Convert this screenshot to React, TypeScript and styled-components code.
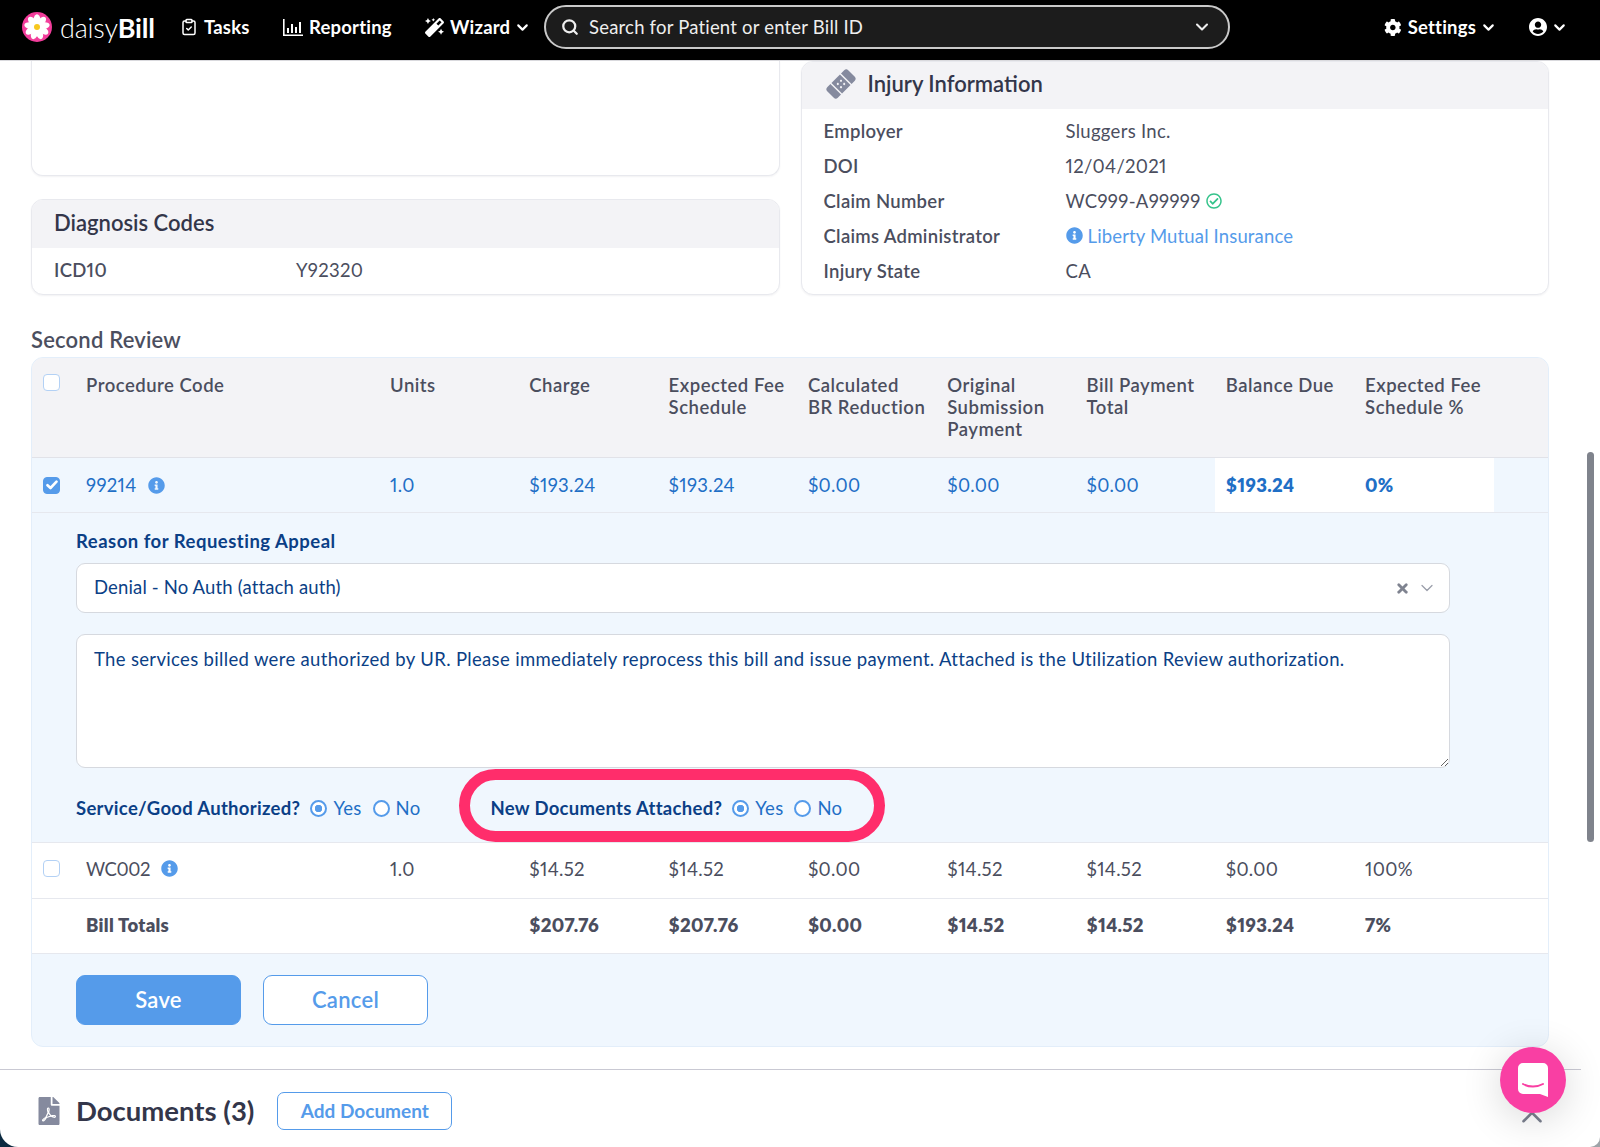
import * as React from 'react';
import styled, { createGlobalStyle } from 'styled-components';
import { ChevronDown, ChevronUp, ClipboardCheck, Search, X } from 'lucide-react';
import { FaBandAid, FaCog, FaFilePdf, FaInfoCircle, FaMagic, FaRegCheckCircle, FaUserCircle } from 'react-icons/fa';

const BLUE = '#559bea';
const LINK = '#1f6fc6';
const NAVY = '#0b3f86';
const TEXT = '#4b4e5e';

const GlobalStyle = createGlobalStyle`
    html, body {
        margin: 0;
        padding: 0;
        background: #fff;
    }
    * {
        box-sizing: border-box;
    }
    body {
        font-family: Lato, "Liberation Sans", sans-serif;
        font-size: 18.5px;
        font-feature-settings: "pnum";
        color: ${TEXT};
    }
`;

const Frame = styled.div`
    position: relative;
    width: 1600px;
    height: 1147px;
    overflow: hidden;
    background: linear-gradient(to right, #0b2a40 50%, #9ea3a8 50%);
`;

const Page = styled.div`
    height: 100%;
    display: flex;
    flex-direction: column;
    background: #fff;
    border-radius: 0 0 10px 18px;
    overflow: hidden;
`;

const TopBar = styled.header`
    height: 61px;
    flex: none;
    display: flex;
    align-items: center;
    background: #000;
    color: #fff;
    border-bottom: 1px solid #d9d9dd;
    padding: 0 32px 6px 22px;
    font-weight: 700;
`;

const Logo = styled.div`
    display: flex;
    align-items: center;
    gap: 8px;
    width: 158px;
    font-size: 27px;
    font-weight: 300;
    letter-spacing: -0.2px;
    b {
        font-weight: 700;
    }
`;

const NavItem = styled.div<{ $width: number }>`
    display: flex;
    align-items: center;
    gap: 6px;
    width: ${(props) => props.$width}px;
    font-size: 18.5px;
    letter-spacing: 0.2px;
    white-space: nowrap;
`;

const NavChevron = styled(ChevronDown)`
    flex: none;
    margin-left: -2px;
`;

const SearchBox = styled.div`
    width: 686px;
    height: 44px;
    display: flex;
    align-items: center;
    gap: 10px;
    padding: 0 16px 0 15px;
    background: #1c1c1c;
    border: 2px solid #c9c9c9;
    border-radius: 22px;
    font-weight: 400;
    font-size: 18.5px;
    color: #eee;
    letter-spacing: 0.2px;
    span {
        flex: 1;
    }
`;

const NavRight = styled.div`
    margin-left: auto;
    display: flex;
    align-items: center;
    gap: 32px;
`;

const Main = styled.main`
    flex: 1;
    padding: 0 51px 0 31px;
`;

const TopGrid = styled.div`
    display: grid;
    grid-template-columns: 1fr 1fr;
    gap: 21px;
    height: 234px;
`;

const LeftColumn = styled.div`
    display: flex;
    flex-direction: column;
    gap: 23px;
`;

const Card = styled.section`
    background: #fff;
    border: 1px solid #e8e9ee;
    border-radius: 12px;
    box-shadow: 0 1px 2px rgba(40, 40, 70, 0.06);
    overflow: hidden;
`;

const BlankCard = styled(Card)`
    flex: 1;
    border-top: 0;
    border-radius: 0 0 12px 12px;
`;

const CardHeader = styled.h3<{ $height: number }>`
    margin: 0;
    height: ${(props) => props.$height}px;
    display: flex;
    align-items: center;
    gap: 12px;
    padding: 0 22px 4px;
    background: #f3f3f6;
    font-size: 22px;
    font-weight: 600;
    color: #33364a;
    svg {
        width: 30px;
        height: 30px;
        color: #858a9e;
        margin-left: 2px;
        transform: rotate(-45deg);
    }
`;

const InfoList = styled.div`
    padding: 4px 22px 6px;
`;

const InfoRow = styled.div<{ $height?: number }>`
    height: ${(props) => props.$height || 35}px;
    display: grid;
    grid-template-columns: 242px 1fr;
    align-items: center;
    letter-spacing: 0.3px;
`;

const InfoLabel = styled.div`
    font-weight: 600;
`;

const InfoValue = styled.div`
    display: flex;
    align-items: center;
    gap: 5px;
`;

const BlueText = styled.span`
    color: ${BLUE};
    letter-spacing: 0.15px;
`;

const SectionTitle = styled.h2`
    margin: 33px 0 5px;
    height: 24px;
    line-height: 24px;
    font-size: 22px;
    font-weight: 600;
    letter-spacing: 0.2px;
`;

const ReviewTable = styled.div`
    background: #f0f7fe;
    border: 1px solid #e3eefa;
    border-radius: 12px;
    overflow: hidden;
    height: 690px;
    display: flex;
    flex-direction: column;
    letter-spacing: 0.3px;
`;

const COLUMNS = '44px 304px repeat(8, 139.3px) 1fr';

const HeadRow = styled.div`
    display: grid;
    grid-template-columns: ${COLUMNS};
    height: 100px;
    flex: none;
    padding-top: 16px;
    background: #f3f3f6;
    border-bottom: 1px solid #e1e2e8;
    line-height: 22px;
    font-weight: 600;
    letter-spacing: 0.5px;
`;

const HeadCell = styled.div`
    padding-left: 10px;
`;

const BodyRow = styled.div<{ $bg: string; $color?: string; $height?: number; $lift?: number }>`
    display: grid;
    grid-template-columns: ${COLUMNS};
    flex: none;
    height: ${(props) => props.$height || 55}px;
    padding-bottom: ${(props) => props.$lift || 0}px;
    background: ${(props) => props.$bg};
    color: ${(props) => props.$color || TEXT};
    border-bottom: 1px solid #e6e8ee;
`;

const Cell = styled.div<{ $white?: boolean; $bold?: boolean }>`
    display: flex;
    align-items: center;
    gap: 11px;
    padding-left: 10px;
    background: ${(props) => (props.$white ? '#fff' : 'transparent')};
    font-weight: ${(props) => (props.$bold ? 800 : 400)};
`;

const WhiteStart = styled(Cell)`
    margin-left: -1px;
    padding-left: 11px;
`;

const TightCode = styled.span`
    letter-spacing: -0.4px;
`;

const CheckCell = styled.div`
    display: flex;
    align-items: center;
    padding-left: 11px;
`;

const CheckBox = styled.span<{ $checked?: boolean }>`
    width: 17px;
    height: 17px;
    border-radius: 4px;
    border: 1.5px solid ${(props) => (props.$checked ? BLUE : '#b3d1f5')};
    background: ${(props) => (props.$checked ? BLUE : '#fff')};
    color: #fff;
    display: flex;
    align-items: center;
    justify-content: center;
`;

const HeadCheck = styled(CheckCell)`
    align-items: flex-start;
`;

const DetailPanel = styled.div`
    height: 330px;
    flex: none;
    padding: 17px 98px 0 44px;
    border-bottom: 1px solid #e6e8ee;
    color: ${NAVY};
`;

const FieldLabel = styled.div`
    height: 22px;
    line-height: 22px;
    font-weight: 700;
    letter-spacing: 0.5px;
`;

const SelectBox = styled.div`
    margin-top: 11px;
    height: 50px;
    display: flex;
    align-items: center;
    padding: 0 12px 3px 17px;
    background: #fff;
    border: 1px solid #d6d9df;
    border-radius: 9px;
    letter-spacing: 0.15px;
    span {
        flex: 1;
    }
`;

const ClearIcon = styled(X)`
    color: #7f8390;
    margin: 3px 7px 0 0;
`;

const CaretIcon = styled(ChevronDown)`
    color: #9a9eaa;
    margin-top: 3px;
`;

const NoteArea = styled.textarea`
    display: block;
    width: 100%;
    height: 134px;
    margin-top: 21px;
    padding: 12px 17px;
    background: #fff;
    border: 1px solid #d6d9df;
    border-radius: 9px;
    color: ${NAVY};
    font: inherit;
    letter-spacing: 0.33px;
    line-height: 24px;
    outline: none;
`;

const OptionsRow = styled.div`
    margin-top: 24px;
    height: 32px;
    display: flex;
    align-items: center;
    gap: 70px;
`;

const RadioGroup = styled.div`
    position: relative;
    display: flex;
    align-items: center;
`;

const RadioLabel = styled.span`
    font-weight: 700;
    margin-right: 10px;
`;

const RadioDot = styled.span<{ $on?: boolean }>`
    width: 17px;
    height: 17px;
    border-radius: 50%;
    border: 2.5px solid ${BLUE};
    background: ${(props) => (props.$on ? `radial-gradient(circle, ${BLUE} 0 3.5px, #fff 4px)` : '#fff')};
    margin-right: 6px;
`;

const RadioText = styled.span<{ $last?: boolean }>`
    color: ${LINK};
    margin-right: ${(props) => (props.$last ? 0 : 11)}px;
`;

const HighlightRing = styled.div`
    position: absolute;
    left: -32px;
    right: -43px;
    top: -28px;
    bottom: -23px;
    border: 11px solid #ff2d6b;
    border-radius: 38px;
    pointer-events: none;
`;

const ButtonRow = styled.div`
    display: flex;
    gap: 22px;
    padding: 21px 0 0 44px;
`;

const Button = styled.div<{ $primary?: boolean }>`
    width: 165px;
    height: 50px;
    display: flex;
    align-items: center;
    justify-content: center;
    padding-bottom: 2px;
    border-radius: 9px;
    border: 1px solid ${BLUE};
    background: ${(props) => (props.$primary ? BLUE : '#fff')};
    color: ${(props) => (props.$primary ? '#fff' : BLUE)};
    font-size: 22px;
    font-weight: 600;
`;

const DocsBar = styled.footer`
    height: 78px;
    margin-right: 19px;
    flex: none;
    display: flex;
    align-items: center;
    padding: 4px 32px 0 35px;
    border-top: 1px solid #c9c9d3;
    svg {
        flex: none;
    }
`;

const DocsTitle = styled.h2`
    margin: 0 23px 0 13px;
    font-size: 27.5px;
    font-weight: 700;
    color: #33364a;
`;

const AddDocButton = styled.div`
    width: 175px;
    height: 38px;
    display: flex;
    align-items: center;
    justify-content: center;
    border: 1px solid ${BLUE};
    border-radius: 7px;
    color: ${BLUE};
    font-weight: 700;
    font-size: 19px;
`;

const DocsCaret = styled(ChevronUp)`
    margin-left: auto;
    margin-top: 12px;
    color: #7a7f8e;
`;

const ScrollThumb = styled.div`
    position: absolute;
    left: 1587px;
    top: 452px;
    width: 7px;
    height: 390px;
    border-radius: 4px;
    background: #7f838c;
`;

const ChatBubble = styled.div`
    position: absolute;
    left: 1500px;
    top: 1047px;
    width: 66px;
    height: 66px;
    border-radius: 50%;
    background: #f93fa3;
    box-shadow: 0 6px 40px rgba(0, 0, 0, 0.16);
    display: flex;
    align-items: center;
    justify-content: center;
`;

const LogoMark = () => (
    <svg width="30" height="30" viewBox="0 0 30 30">
        <circle cx="15" cy="15" r="15" fill="#f23d9b" />
        {[0, 40, 80, 120, 160, 200, 240, 280, 320].map((angle) => (
            <ellipse key={angle} cx="15" cy="7.6" rx="3.3" ry="5.4" fill="#fff" transform={`rotate(${angle} 15 15)`} />
        ))}
        <circle cx="15" cy="15" r="3" fill="#f7c81e" />
    </svg>
);

const ReportIcon = () => (
    <svg width="20" height="17" viewBox="0 0 20 17" fill="#fff">
        <path d="M0 0h1.6v15.4H20V17H0z" />
        <rect x="4" y="9" width="2" height="5" />
        <rect x="8" y="5" width="2" height="9" />
        <rect x="12" y="8" width="2" height="6" />
        <rect x="16" y="3" width="2" height="11" />
    </svg>
);

const ChatIcon = () => (
    <svg width="30" height="34" viewBox="0 0 30 34">
        <path d="M5 0h20a5 5 0 0 1 5 5v29l-8-3H5a5 5 0 0 1-5-5V5a5 5 0 0 1 5-5z" fill="#fff" />
        <path d="M5 21c6 3.4 14 3.4 20 0" fill="none" stroke="#f93fa3" strokeWidth="2" strokeLinecap="round" />
    </svg>
);

const Check = () => (
    <svg width="12" height="10" viewBox="0 0 12 10" fill="none" stroke="#fff" strokeWidth="2.6" strokeLinecap="round" strokeLinejoin="round">
        <path d="M1.5 5.2 4.5 8 10.5 1.6" />
    </svg>
);

const CHEVRON = <NavChevron size={17} strokeWidth={3} />;

const HEADINGS = [
    ['Procedure Code'],
    ['Units'],
    ['Charge'],
    ['Expected Fee', 'Schedule'],
    ['Calculated', 'BR Reduction'],
    ['Original', 'Submission', 'Payment'],
    ['Bill Payment', 'Total'],
    ['Balance Due'],
    ['Expected Fee', 'Schedule %'],
];

const INFO = [
    { label: 'Employer', value: 'Sluggers Inc.' },
    { label: 'DOI', value: '12/04/2021' },
];

const RadioPair = (props: { label: string; ring?: boolean }) => (
    <RadioGroup>
        <RadioLabel>{props.label}</RadioLabel>
        <RadioDot $on />
        <RadioText>Yes</RadioText>
        <RadioDot />
        <RadioText $last>No</RadioText>
        {props.ring ? <HighlightRing /> : null}
    </RadioGroup>
);

const App = () => (
    <Frame>
        <GlobalStyle />
        <Page>
            <TopBar>
                <Logo>
                    <LogoMark />
                    <span>daisy<b>Bill</b></span>
                </Logo>
                <NavItem $width={103}>
                    <ClipboardCheck size={18} strokeWidth={2} />
                    Tasks
                </NavItem>
                <NavItem $width={142}>
                    <ReportIcon />
                    Reporting
                </NavItem>
                <NavItem $width={119}>
                    <FaMagic size={19} />
                    Wizard
                    {CHEVRON}
                </NavItem>
                <SearchBox>
                    <Search size={18} strokeWidth={3} />
                    <span>Search for Patient or enter Bill ID</span>
                    <ChevronDown size={20} strokeWidth={2.5} />
                </SearchBox>
                <NavRight>
                    <NavItem $width={113}>
                        <FaCog size={21} />
                        Settings
                        {CHEVRON}
                    </NavItem>
                    <NavItem $width={39}>
                        <FaUserCircle size={20} />
                        {CHEVRON}
                    </NavItem>
                </NavRight>
            </TopBar>

            <Main>
                <TopGrid>
                    <LeftColumn>
                        <BlankCard />
                        <Card>
                            <CardHeader $height={48}>Diagnosis Codes</CardHeader>
                            <InfoList>
                                <InfoRow $height={36}>
                                    <InfoLabel>ICD10</InfoLabel>
                                    <InfoValue>Y92320</InfoValue>
                                </InfoRow>
                            </InfoList>
                        </Card>
                    </LeftColumn>
                    <Card>
                        <CardHeader $height={47}>
                            <FaBandAid />
                            Injury Information
                        </CardHeader>
                        <InfoList>
                            {INFO.map((row) => (
                                <InfoRow key={row.label}>
                                    <InfoLabel>{row.label}</InfoLabel>
                                    <InfoValue>{row.value}</InfoValue>
                                </InfoRow>
                            ))}
                            <InfoRow>
                                <InfoLabel>Claim Number</InfoLabel>
                                <InfoValue>
                                    WC999-A99999
                                    <FaRegCheckCircle size={16} color="#35c38b" />
                                </InfoValue>
                            </InfoRow>
                            <InfoRow>
                                <InfoLabel>Claims Administrator</InfoLabel>
                                <InfoValue>
                                    <FaInfoCircle size={17} color={BLUE} />
                                    <BlueText>Liberty Mutual Insurance</BlueText>
                                </InfoValue>
                            </InfoRow>
                            <InfoRow>
                                <InfoLabel>Injury State</InfoLabel>
                                <InfoValue>CA</InfoValue>
                            </InfoRow>
                        </InfoList>
                    </Card>
                </TopGrid>

                <SectionTitle>Second Review</SectionTitle>
                <ReviewTable>
                    <HeadRow>
                        <HeadCheck>
                            <CheckBox />
                        </HeadCheck>
                        {HEADINGS.map((lines) => (
                            <HeadCell key={lines[0]}>
                                {lines.map((line) => (
                                    <div key={line}>{line}</div>
                                ))}
                            </HeadCell>
                        ))}
                    </HeadRow>

                    <BodyRow $bg="#f0f7fe" $color={LINK}>
                        <CheckCell>
                            <CheckBox $checked>
                                <Check />
                            </CheckBox>
                        </CheckCell>
                        <Cell>
                            99214
                            <FaInfoCircle size={17} color={BLUE} />
                        </Cell>
                        <Cell>1.0</Cell>
                        <Cell>$193.24</Cell>
                        <Cell>$193.24</Cell>
                        <Cell>$0.00</Cell>
                        <Cell>$0.00</Cell>
                        <Cell>$0.00</Cell>
                        <WhiteStart $white $bold>$193.24</WhiteStart>
                        <Cell $white $bold>0%</Cell>
                    </BodyRow>

                    <DetailPanel>
                        <FieldLabel>Reason for Requesting Appeal</FieldLabel>
                        <SelectBox>
                            <span>Denial - No Auth (attach auth)</span>
                            <ClearIcon size={15} strokeWidth={4.5} />
                            <CaretIcon size={20} strokeWidth={1.5} />
                        </SelectBox>
                        <NoteArea
                            readOnly
                            defaultValue="The services billed were authorized by UR. Please immediately reprocess this bill and issue payment. Attached is the Utilization Review authorization."
                        />
                        <OptionsRow>
                            <RadioPair label="Service/Good Authorized?" />
                            <RadioPair label="New Documents Attached?" ring />
                        </OptionsRow>
                    </DetailPanel>

                    <BodyRow $bg="#fff" $height={56} $lift={4}>
                        <CheckCell>
                            <CheckBox />
                        </CheckCell>
                        <Cell>
                            <TightCode>WC002</TightCode>
                            <FaInfoCircle size={17} color={BLUE} />
                        </Cell>
                        <Cell>1.0</Cell>
                        <Cell>$14.52</Cell>
                        <Cell>$14.52</Cell>
                        <Cell>$0.00</Cell>
                        <Cell>$14.52</Cell>
                        <Cell>$14.52</Cell>
                        <Cell>$0.00</Cell>
                        <Cell>100%</Cell>
                    </BodyRow>

                    <BodyRow $bg="#fff" $lift={2}>
                        <div />
                        <Cell $bold>Bill Totals</Cell>
                        <div />
                        <Cell $bold>$207.76</Cell>
                        <Cell $bold>$207.76</Cell>
                        <Cell $bold>$0.00</Cell>
                        <Cell $bold>$14.52</Cell>
                        <Cell $bold>$14.52</Cell>
                        <Cell $bold>$193.24</Cell>
                        <Cell $bold>7%</Cell>
                    </BodyRow>

                    <ButtonRow>
                        <Button $primary>Save</Button>
                        <Button>Cancel</Button>
                    </ButtonRow>
                </ReviewTable>
            </Main>

            <DocsBar>
                <FaFilePdf size={28} color="#858a9e" />
                <DocsTitle>Documents (3)</DocsTitle>
                <AddDocButton>Add Document</AddDocButton>
                <DocsCaret size={34} strokeWidth={1.8} />
            </DocsBar>
        </Page>
        <ScrollThumb />
        <ChatBubble>
            <ChatIcon />
        </ChatBubble>
    </Frame>
);

export default App;
